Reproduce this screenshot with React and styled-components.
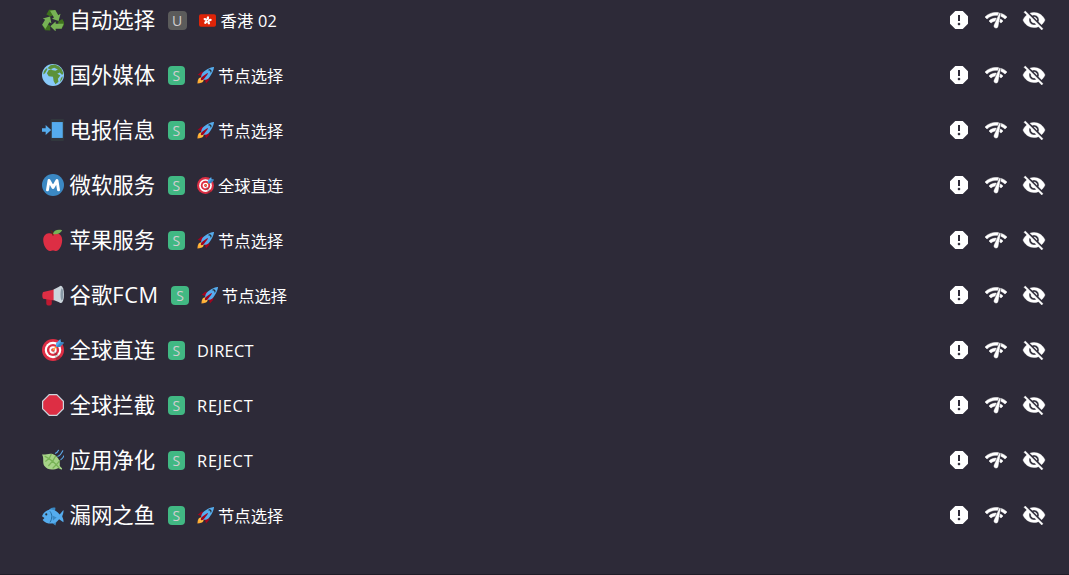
import React from "react";
import styled, { createGlobalStyle } from "styled-components";
import { MdReport, MdNetworkCheck, MdVisibilityOff } from "react-icons/md";

const GlobalStyle = createGlobalStyle`
  * { box-sizing: border-box; }
  body { margin: 0; background: #2d2a38; color: #fff; overflow: hidden; }
`;

const Page = styled.main`
  height: 575px;
  border-bottom: 1px solid #1f1d28;
  background: #2d2a38;
  font-family: "Open Sans", "Noto Sans CJK SC", sans-serif;
`;

const GroupList = styled.div`
  display: flex;
  flex-direction: column;
  gap: 14px;
`;

const Row = styled.div`
  display: flex;
  align-items: center;
  justify-content: space-between;
  height: 41px;
  padding: 0 23px 0 42px;
`;

const Info = styled.div`
  display: flex;
  align-items: center;
  white-space: nowrap;
`;

const Emoji = styled.svg`
  display: block;
  flex: none;
  width: ${(p) => p.$size}px;
  height: ${(p) => p.$size}px;
  margin-bottom: ${(p) => (p.$size > 20 ? 1 : 0)}px;
`;

const Title = styled.span`
  margin: 0 0 1px 5.5px;
  font-size: 21.4px;
  line-height: 40px;
`;

const TitleLatin = styled.span`
  font-size: 21.8px;
  letter-spacing: 0.65px;
`;

const Badge = styled.span`
  display: flex;
  align-items: center;
  justify-content: center;
  width: ${(p) => (p.$type === "U" ? 19 : 17.5)}px;
  height: 19px;
  margin: 0 12px 0 12.5px;
  border-radius: 4px;
  background: ${(p) => (p.$type === "U" ? "#5b5b5b" : "#41b883")};
  color: #d0cdd0;
  font-size: 14px;
  line-height: 19px;
`;

const Current = styled.span`
  display: flex;
  align-items: center;
  gap: 4px;
  height: 41px;
  font-size: 16.3px;
  line-height: 41px;
`;

const CurrentName = styled.span`
  margin-top: 1px;
  padding-left: ${(p) => (p.$region ? 1 : 0)}px;
  letter-spacing: ${(p) => (p.$region ? 0.2 : 0)}px;
`;

const Latin = styled.span`
  margin-bottom: 1px;
  font-size: 16.4px;
  letter-spacing: ${(p) => p.$spacing}px;
`;

const Actions = styled.div`
  display: flex;
  align-items: center;
  gap: 13.6px;
`;

const Action = styled.span`
  display: flex;
  width: 24px;
  height: 24px;
  margin-bottom: 1px;
  svg { width: 24px; height: 24px; }
  path:not([fill="none"]) { stroke: #fff; stroke-width: ${(p) => p.$weight || 0}px; }
`;

const LeafVein = "M5 12c8 4 15 9 23 19M12 15l3-6M12 15l-6 5M18 19l4-7M18 19l-7 8M24 25l5-6M24 25l-6 6";

const emojis = {
  recycle: (
    <>
      {[0, 120, 240].map((angle) => (
        <g key={angle} transform={`translate(18 20) scale(1.08) rotate(${angle}) translate(-18 -20.5)`}>
          <path fill="#3E721D" d="M26 21l6-4 4 7-5 8-5-4z" />
          <path fill="#77B255" d="M14 28l8-7v3.500h12L31 32h-9v4z" />
        </g>
      ))}
    </>
  ),
  globe: (
    <>
      <circle cx="18" cy="18" r="18" fill="#88C9F9" />
      <path fill="#5C913B" d="M9 7l5-5 7-1 7 3 4 4 3 7-2 3-4-4-4 2 5 3-4 5 1 5-5 4-3-5-1-7-7-1-3-5 3-5 4-1zM3 12l4-5 2 1-4 7-3 2zM31 23l3-3-1 5-4 5z" />
      <path fill="#88C9F9" d="M15 8l5-2 6 3-4 2-6-1z" />
    </>
  ),
  phone: (
    <>
      <path fill="#31373D" d="M16 0h18c1.100 0 2 .9 2 2v32c0 1.100-.9 2-2 2H16c-1.100 0-2-.9-2-2V2c0-1.100.9-2 2-2z" />
      <path fill="#55ACEE" d="M16 5h18v26H16z" />
      <path fill="#55ACEE" d="M0 15h6v-5l9 8-9 8v-5H0z" />
    </>
  ),
  metro: (
    <>
      <circle cx="18" cy="18" r="18" fill="#3B88C3" />
      <path d="M9 26L11.500 10.500 18 22 24.500 10.500 27 26" fill="none" stroke="#fff" strokeWidth="4.800" strokeLinecap="round" strokeLinejoin="round" />
    </>
  ),
  apple: (
    <>
      <path fill="#DD2E44" d="M24 7c-3 0-3 1-6 1s-4-1-7-1C6 7 2 12 2 18c0 9 6 18 11 18 2 0 3-1 5-1s3 1 5 1c5 0 10-9 10-18 0-6-4-11-9-11z" />
      <path d="M18 10c0-3-1-5-3-7" fill="none" stroke="#662113" strokeWidth="2" strokeLinecap="round" />
      <path fill="#77B255" d="M18 8c1-6 8-8 15-6-3 5-9 8-15 6z" />
    </>
  ),
  megaphone: (
    <>
      <path fill="#BE1931" d="M7 20h9v12c0 2-1 3-3 3h-3c-2 0-3-1-3-3z" />
      <path fill="#DD2E44" d="M2 13l18-4v18L2 24c-2-2-2-9 0-11z" />
      <path fill="#CCD6DD" d="M19 9l12-6v28l-12-5z" />
      <ellipse cx="31" cy="17" rx="5" ry="14" fill="#CCD6DD" />
      <ellipse cx="32.500" cy="17" rx="2.200" ry="10" fill="#8899A6" />
    </>
  ),
  target: (
    <>
      <circle cx="18" cy="18" r="18" fill="#DD2E44" />
      <circle cx="18" cy="18" r="13.500" fill="#fff" />
      <circle cx="18" cy="18" r="10" fill="#DD2E44" />
      <circle cx="18" cy="18" r="6" fill="#fff" />
      <circle cx="18" cy="18" r="3" fill="#DD2E44" />
      <path opacity=".2" d="M18.240 18.282l13.144 11.754s-2.647 3.376-7.890 5.109L17.579 18.420z" />
      <path d="M18 18L30 6" stroke="#FFAC33" strokeWidth="2" strokeLinecap="round" />
      <path fill="#55ACEE" d="M23 13V7l7-7 1 5 5 1-7 7z" />
      <path fill="#3A87C2" d="M23 13l8-8 5 1-7 7z" />
    </>
  ),
  stop: (
    <>
      <path fill="#CCD6DD" d="M11.400 0h13.200L36 11.400v13.200L24.600 36H11.400L0 24.600V11.400z" />
      <path fill="#DD2E44" d="M12.200 2h11.600L34 12.200v11.600L23.800 34H12.200L2 23.800V12.200z" />
    </>
  ),
  leaf: (
    <>
      <path fill="#A6D388" d="M0 9c7 1 14-4 21 1 7 5 9 12 8 18l4 4-1 2-5-3c-8 4-18 4-23-3C0 22 4 15 0 9z" />
      <path d={LeafVein} fill="none" stroke="#77B255" strokeWidth="2" strokeLinecap="round" />
      <path d="M22 7c3-1 4-3 5-5M26 12c4-1 6-5 8-9M31 17c2-1 4-3 5-6" fill="none" stroke="#5DADEC" strokeWidth="1.800" strokeLinecap="round" />
    </>
  ),
  fish: (
    <>
      <path fill="#3B88C3" d="M11 11c2-5 7-6 11-5l-1 9zM14 29l8 6 2-7z" />
      <path fill="#55ACEE" d="M0 20C3 13 9 9 15 9c6 0 10 4 14 8l6-7c1 3-1 8-2 10 1 3 3 7 2 10l-7-5c-4 5-8 7-13 7-6 0-11-2-14-6l3-3z" />
      <path d="M13 12c4 5 4 12 0 18" fill="none" stroke="#269" strokeWidth="1.500" />
      <circle cx="7" cy="17" r="1.700" fill="#292F33" />
      <path fill="#3B88C3" d="M17 19l7 3-6 5z" />
    </>
  ),
  rocket: (
    <>
      <path fill="#A0041E" d="M1 17l8-7 16 1 1 16-7 8s0-6-6-12-12-6-12-6z" />
      <path fill="#FFAC33" d="M1 35s0-8 3-11 11-2.800 11-2.800S15 29 12 32 1 35 1 35z" />
      <circle cx="9" cy="27" r="4" fill="#FFCC4D" />
      <path fill="#55ACEE" d="M36 0S26 0 14 10c-6 5-6 14-4 16s11 2 16-4C36 10 36 0 36 0z" />
      <path fill="#292F33" d="M27 5c-1.600 0-3 1-3.600 2.400A4 4 0 0 1 28.600 12.600 4 4 0 0 0 27 5z" />
      <path fill="#A0041E" d="M8 28s0-4 1-5 13-11 14-10-9 13-10 14-5 1-5 1z" />
    </>
  ),
  hongkong: (
    <>
      <rect y="5" width="36" height="26" rx="4" fill="#DE2408" />
      {[0, 72, 144, 216, 288].map((angle) => (
        <ellipse key={angle} cx="18" cy="13" rx="2.600" ry="4.200" fill="#fff" transform={`rotate(${angle + 8} 18 18)`} />
      ))}
    </>
  ),
};

const groups = [
  { icon: "recycle", name: "自动选择", type: "U", nowIcon: "hongkong", now: "香港 02" },
  { icon: "globe", name: "国外媒体", type: "S", nowIcon: "rocket", now: "节点选择" },
  { icon: "phone", name: "电报信息", type: "S", nowIcon: "rocket", now: "节点选择" },
  { icon: "metro", name: "微软服务", type: "S", nowIcon: "target", now: "全球直连" },
  { icon: "apple", name: "苹果服务", type: "S", nowIcon: "rocket", now: "节点选择" },
  { icon: "megaphone", name: "谷歌", latin: "FCM", type: "S", nowIcon: "rocket", now: "节点选择" },
  { icon: "target", name: "全球直连", type: "S", now: "DIRECT", spacing: 0.3 },
  { icon: "stop", name: "全球拦截", type: "S", now: "REJECT", spacing: 0.7 },
  { icon: "leaf", name: "应用净化", type: "S", now: "REJECT", spacing: 0.7 },
  { icon: "fish", name: "漏网之鱼", type: "S", nowIcon: "rocket", now: "节点选择" },
];

function EmojiIcon({ name, size }) {
  return <Emoji $size={size} viewBox="0 0 36 36" aria-hidden="true">{emojis[name]}</Emoji>;
}

function ProxyGroup({ group }) {
  return (
    <Row>
      <Info>
        <EmojiIcon name={group.icon} size={22} />
        <Title>
          {group.name}
          {group.latin && <TitleLatin>{group.latin}</TitleLatin>}
        </Title>
        <Badge $type={group.type}>{group.type}</Badge>
        <Current>
          {group.nowIcon ? (
            <>
              <EmojiIcon name={group.nowIcon} size={17} />
              <CurrentName $region={group.nowIcon === "hongkong"}>{group.now}</CurrentName>
            </>
          ) : (
            <Latin $spacing={group.spacing}>{group.now}</Latin>
          )}
        </Current>
      </Info>
      <Actions>
        <Action><MdReport /></Action>
        <Action $weight={0.5}><MdNetworkCheck /></Action>
        <Action $weight={0.4}><MdVisibilityOff /></Action>
      </Actions>
    </Row>
  );
}

export default function App() {
  return (
    <Page>
      <GlobalStyle />
      <GroupList>
        {groups.map((group) => <ProxyGroup key={group.icon} group={group} />)}
      </GroupList>
    </Page>
  );
}
